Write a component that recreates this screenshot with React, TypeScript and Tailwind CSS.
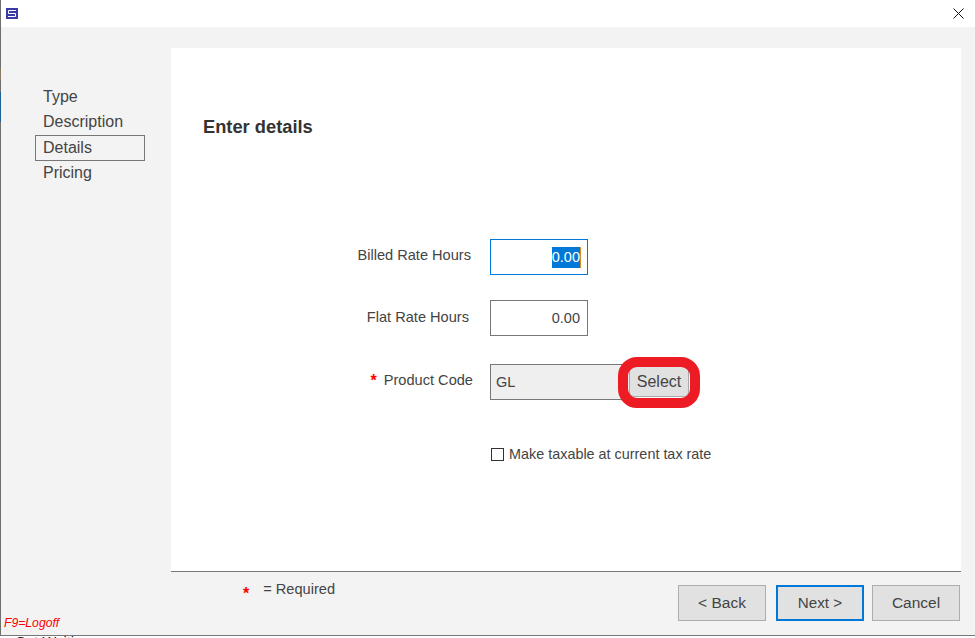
const steps = ['Type', 'Description', 'Details', 'Pricing'];

const FieldLabel = ({ text, offset, required }: { text: string; offset: string; required?: boolean }) => (
    <div className={`w-[319px] flex justify-end items-center text-[14.6px] text-[#444] ${offset}`}>
        {required && <span className="text-[#f00] text-[16px] font-bold mr-[7px]">*</span>}
        {text}
    </div>
);

const App = () => {
    return (
        <div className="w-[975px] h-[638px] overflow-hidden flex flex-col bg-white font-['Liberation_Sans',Arial,sans-serif]">
            <div className="h-[636px] shrink-0 flex border-b border-[#777]">
                {/* Edge of the window behind */}
                <div className="w-px shrink-0 flex flex-col bg-[#6f6f6f]">
                    <div className="h-[69px]" />
                    <div className="h-[11px] bg-[#8a7a66]" />
                    <div className="h-[12px]" />
                    <div className="h-[30px] bg-[#1f5f96]" />
                </div>

                <div className="flex-1 flex flex-col">
                    {/* Title bar */}
                    <div className="h-[27px] shrink-0 bg-white flex items-center justify-between pl-[5px] pr-[11px]">
                        <svg width="12" height="11" viewBox="0 0 12 11">
                            <rect width="12" height="11" fill="#3b3ba8" />
                            <path d="M10 2.5H2.5V5.5H9.5V8.5H2" fill="none" stroke="#fff" strokeWidth="1" />
                        </svg>
                        <svg width="11" height="11" viewBox="0 0 11 11">
                            <path d="M0.5 0.5L10.5 10.5M10.5 0.5L0.5 10.5" stroke="#111" strokeWidth="1" />
                        </svg>
                    </div>

                    <div className="flex-1 flex bg-[#f3f3f3]">
                        {/* Wizard steps */}
                        <div className="w-[170px] shrink-0 flex flex-col pt-[57px]">
                            <div className="pl-[34px]">
                                {steps.map((step) => (
                                    <div
                                        key={step}
                                        className={`w-[110px] h-[26px] pl-[7px] flex items-center text-[16px] text-[#444] border ${
                                            step === 'Details' ? 'border-[#777]' : 'border-transparent'
                                        } ${step === 'Description' ? '' : '-mb-px'}`}
                                    >
                                        {step}
                                    </div>
                                ))}
                            </div>
                            <div className="mt-auto mb-[5px] pl-[3px] text-[12.2px] leading-[14px] italic text-[#f00]">F9=Logoff</div>
                        </div>

                        <div className="flex-1 flex flex-col pt-[21px] pr-[14px]">
                            {/* Form panel */}
                            <div className="h-[524px] bg-white border-b border-[#777]">
                                <h2 className="pl-[32px] pt-[68px] text-[18.3px] leading-[21px] font-bold text-[#333]">Enter details</h2>

                                <div className="mt-[102px] flex items-start">
                                    <FieldLabel text="Billed Rate Hours" offset="h-[34px] -ml-[19px]" />
                                    <div className="ml-[19px] w-[98px] h-[36px] pt-[1px] border border-[#0078d7] flex items-center justify-end pr-[6px] text-[14.5px]">
                                        <span className="bg-[#0078d7] text-white border-r border-[#e08a2c]">0.00</span>
                                    </div>
                                </div>

                                <div className="mt-[25px] flex items-start">
                                    <FieldLabel text="Flat Rate Hours" offset="h-[36px] -ml-[21px]" />
                                    <div className="ml-[21px] w-[98px] h-[36px] pt-[1px] border border-[#777] flex items-center justify-end pr-[7px] text-[14.5px] text-[#444]">
                                        0.00
                                    </div>
                                </div>

                                <div className="mt-[28px] flex items-start">
                                    <FieldLabel text="Product Code" offset="h-[34px] -ml-[17px]" required />
                                    <div className="ml-[17px] relative w-[200px] h-[36px] flex items-center">
                                        <div className="w-[140px] h-[36px] pt-[1px] border border-[#777] bg-[#efefef] pl-[5px] flex items-center text-[14.5px] text-[#444]">
                                            GL
                                        </div>
                                        <button className="absolute left-[139px] top-[2px] w-[60px] h-[31px] rounded-[5px] border border-[#aaa] bg-[#e1e1e1] text-[16px] text-[#444]">
                                            Select
                                        </button>
                                        {/* Annotation ring */}
                                        <div className="absolute left-[128px] -top-[7px] w-[82px] h-[51px] rounded-[19px] border-[10px] border-[#ed1c24]" />
                                    </div>
                                </div>

                                <div className="mt-[44px] ml-[320px] flex items-center text-[14.4px] text-[#444]">
                                    <span className="w-[13px] h-[13px] border border-[#333] bg-white mr-[5px]" />
                                    Make taxable at current tax rate
                                </div>
                            </div>

                            {/* Footer */}
                            <div className="flex-1 flex justify-between">
                                <div className="pl-[72px] pt-[7px] flex items-start text-[14.6px] text-[#444]">
                                    <span className="text-[#f00] text-[16px] font-bold mt-[3px] mr-[14px]">*</span>= Required
                                </div>
                                <div className="pt-[13px] flex items-start gap-[8px] pr-[1px]">
                                    <button className="w-[88px] h-[36px] mr-[2px] border border-[#adadad] bg-[#e1e1e1] text-[15.5px] text-[#444]">&lt; Back</button>
                                    <button className="w-[88px] h-[36px] border-2 border-[#0078d7] bg-[#e1e1e1] text-[15.2px] text-[#444]">Next &gt;</button>
                                    <button className="w-[88px] h-[36px] border border-[#adadad] bg-[#e1e1e1] text-[15.5px] text-[#444]">Cancel</button>
                                </div>
                            </div>
                        </div>
                    </div>
                </div>
            </div>
            <div className="h-[2px] overflow-hidden pl-[15px] text-[14.5px] leading-[12px] text-[#222]">Get Waiting</div>
        </div>
    );
};

export default App;
